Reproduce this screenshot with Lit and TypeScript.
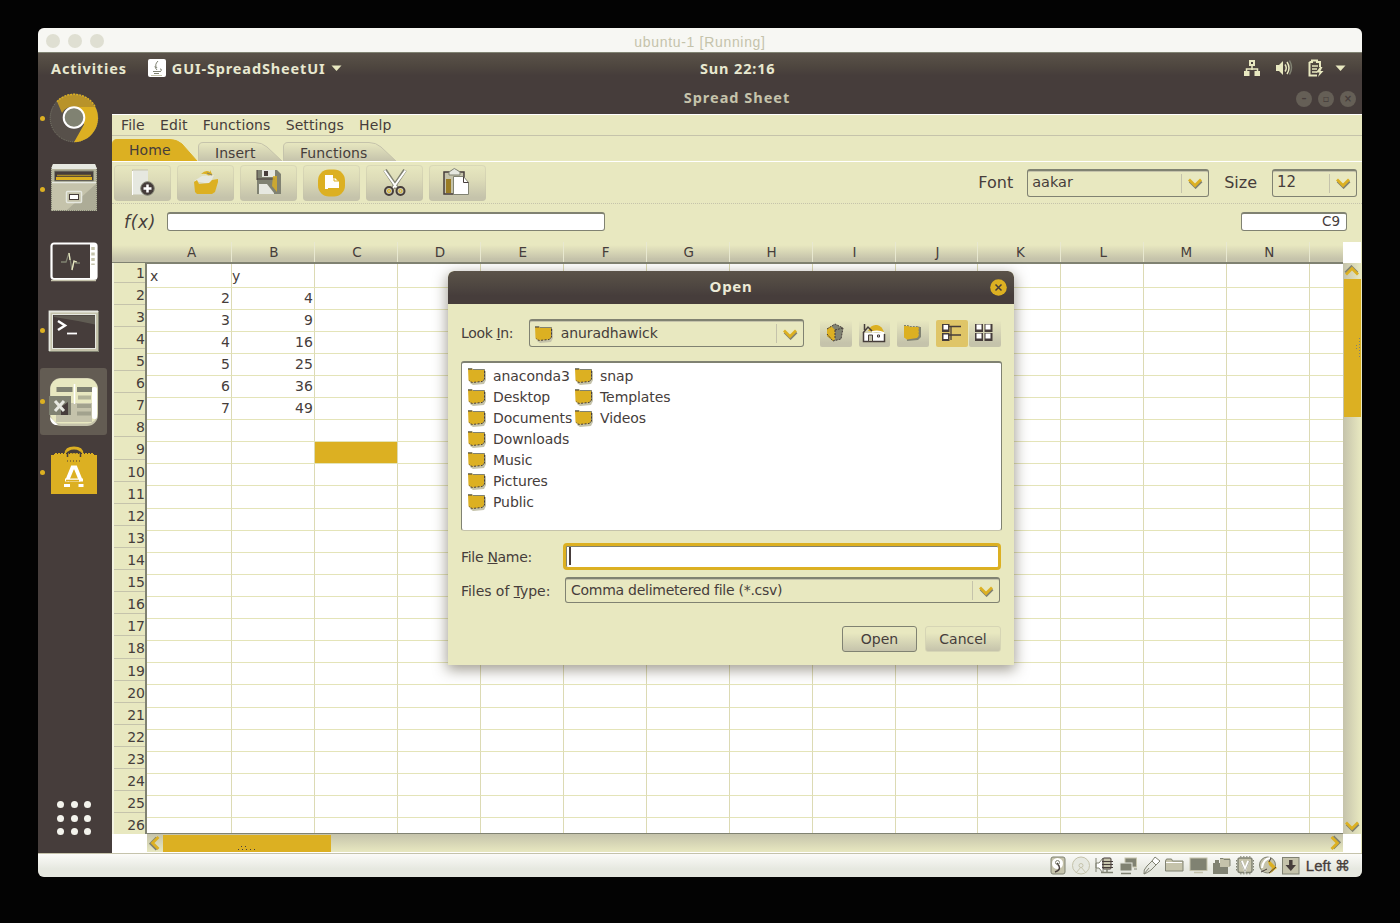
import { LitElement, html, css, svg } from "lit";
import { customElement } from "lit/decorators.js";

const D = "#463d3b";
const G = "#dcb022";
const C = "#e8e8c0";
const M = "#c5c3ab";
const K = "#808272";
const L = "#e6e8e0";

const icon = (w: number, h: number, body: unknown) =>
  html`<svg width=${w} height=${h} viewBox="0 0 ${w} ${h}" fill="none">${body}</svg>`;

const chevron = html`${icon(16, 12, svg`<path d="M2 3.5 L8 9.5 L14 3.5" stroke=${K} stroke-width="2.4" transform="translate(.6 .9)"/><path d="M2 2.5 L8 8.5 L14 2.5" stroke=${G} stroke-width="2.8"/>`)}`;

const folder = icon(20, 18, svg`
  <path d="M3 3 h5 l1 1 h10 v9 l-2 4 -11 1 -3-2z" fill=${M}/>
  <path d="M1 1.500 H5 l1 1 H18 V12 L15.500 14.500 L5 15.500 L1.500 13.500z" fill=${G}/>
  <path d="M1 1.500 H5 l1 1 H17.500 V12 L15.500 14.500" stroke=${K} stroke-width="1"/>
  <path d="M17.500 4 V12 L15 14.500 L5 15.500 L2 13.500" stroke=${D} stroke-width="1" stroke-dasharray="2 1.500"/><path d="M1.500 2.500h3" stroke=${D} stroke-dasharray="1 1"/>`);

const chrome = icon(50, 50, svg`
  <circle cx="25" cy="25" r="23.800" fill="#57504a" stroke=${K} stroke-width="1" stroke-dasharray="1 1"/>
  <path d="M8 8.500 A24 24 0 0 1 46 14 H26 A12 12 0 0 0 13 20z" fill="#b8932a"/>
  <path d="M8 8.500 A24 24 0 0 1 46 13.500" stroke=${G} stroke-width="1.500" stroke-dasharray="2 1"/>
  <path d="M27 14 H46.300 A24.200 24.200 0 0 1 25 49.300 L35 31.500z" fill=${G}/>
  <circle cx="25" cy="24.500" r="10.300" fill=${K} stroke="#fff" stroke-width="2"/>`);

const files = icon(50, 50, svg`<g transform="translate(0 -2)">
  <path d="M4 2 h42 l2 5 v42 h-46 v-42z" fill="#b5b49c"/>
  <path d="M4 2 h42 l2 5 h-46z" fill=${L}/>
  <rect x="6" y="9" width="38" height="10" fill=${D}/>
  <path d="M8 13.500h34" stroke="#a98a2a" stroke-width="1.500"/><path d="M7 16.500h36" stroke=${G} stroke-width="3"/>
  <path d="M5.500 9v10h39v-10z" stroke=${K}/>
  <rect x="3" y="20" width="44" height="28" fill=${M}/>
  <path d="M3 20.500h44" stroke=${L} stroke-width="1.500"/>
  <path d="M47 22v26H18z" fill=${K} opacity=".35"/>
  <path d="M2.500 6v42.500h45V6" stroke=${K} stroke-dasharray="1 1"/>
  <rect x="17.500" y="29.500" width="15" height="11" rx="1" fill=${M} stroke=${L} stroke-width="1.500"/>
  <rect x="20.500" y="32.500" width="9" height="5" fill="#fff" stroke=${D}/></g>`);

const monitor = icon(50, 46, svg`<g transform="translate(0 4)">
  <rect x="2.500" y="2.500" width="45" height="35.500" rx="2.500" fill=${D} stroke="#fff" stroke-width="2.200"/>
  <path d="M2 39.500h45" stroke=${M} stroke-width="1.500"/>
  <rect x="41" y="3" width="6" height="34" fill="#fff"/>
  <path d="M44 6v18" stroke=${M} stroke-width="3.500" stroke-dasharray="3 2.500"/>
  <path d="M12 21h5l3-9 3 17 2-9 2 2h4" stroke=${K} stroke-width="1.300"/>
  <path d="M20 12l1 7M23 29l2-9 3 1" stroke=${C} stroke-width="1.300"/></g>`);

const terminal = icon(52, 44, svg`
  <rect x="1" y="2" width="50" height="41" rx="1" fill=${M}/>
  <path d="M1.500 42V2.500H50" stroke=${L} stroke-width="1.800"/>
  <rect x="4.500" y="5.500" width="43" height="34" fill=${D} stroke=${L}/>
  <path d="M6 6.500h41v9L30 12 6 8z" fill=${K} opacity=".45"/>
  <path d="M50.500 3v39.500H1" stroke=${K}/>
  <path d="M10 12l7 4.500-7 4.500" stroke="#fff" stroke-width="2.500"/><path d="M19 24.500h10" stroke="#fff" stroke-width="1.800"/>`);

const sheet = icon(50, 50, svg`
  <rect x="1" y="1" width="48" height="48" rx="11" fill=${M}/>
  <rect x="1.500" y="1.500" width="47" height="45" rx="10" fill=${C}/>
  <rect x="43" y="10" width="5" height="32" rx="2" fill="#fff"/>
  <rect x="7" y="26" width="36" height="19" fill=${M}/>
  <rect x="7.500" y="10" width="16" height="5" fill=${K}/><rect x="28" y="10" width="15" height="5" fill=${K}/>
  <path d="M29 20.500h13M28 29h14M28 36.500h14" stroke=${K} stroke-width="4" opacity=".5"/>
  <path d="M25.500 7v20" stroke="#fff" stroke-width="1.500"/>
  <rect x="0" y="19" width="22" height="19" fill=${K}/><path d="M12 38V30l7-5v13z" fill=${D}/>
  <path d="M6 24l9 10M15 24l-9 10" stroke=${L} stroke-width="3"/><path d="M1 40l8 8H6q-5-2-5-8z" fill="#fff"/>`);

const software = icon(50, 52, svg`<g transform="translate(0 -1)">
  <path d="M17 9 q0-6 8-6 t8 6" stroke=${G} stroke-width="2.800"/>
  <path d="M5 8h40v3H5z" fill=${G}/><rect x="2" y="10" width="46" height="39" fill=${G}/>
  <path d="M5 8.500h40" stroke=${D} stroke-dasharray="1 2"/>
  <path d="M18.500 12V7.500h13V12" stroke=${D} stroke-width="1.500"/><path d="M21 8.500h8v3h-8z" fill=${G}/>
  <path d="M18 16h15" stroke=${D} stroke-dasharray="1 2"/>
  <path d="M18 36L23.500 22.500h3L32 36" stroke="#fff" stroke-width="3.800"/><path d="M15 40.500h6M29.500 40.500h5M16 35h18" stroke="#fff" stroke-width="3"/>
  <path d="M17 35.500h13" stroke=${G} stroke-width="1.500"/></g>`);

const java = icon(18, 18, svg`<rect width="18" height="18" rx="2" fill="#fff"/><path d="M10 2q-4 4-1 7M7 7q0 2 2 4M5 12.500h7M6 14.500h5M12 10q3 0 0 3" stroke=${K}/><path d="M3 16.500h11" stroke=${M}/>`);
const tri = icon(11, 7, svg`<path d="M.5 .5h10L5.500 6z" fill=${C}/>`);
const network = icon(18, 18, svg`<path d="M9 6v5M3.500 13v-3h11v3" stroke=${C} stroke-width="1.500"/><path d="M6 1h6v6H6zM1 12h5.500v5H1zM11.500 12H17v5h-5.500z" fill=${C}/><path d="M8 3h2v2H8z" fill=${D}/>`);
const sound = icon(18, 18, svg`<path d="M1 6h3l4-4v14l-4-4H1z" fill=${C}/><path d="M10 5.500q2.500 3.500 0 7M12 3q4 6 0 12" stroke=${C} stroke-width="1.500"/><path d="M14.500 1.500q4 7 0 14" stroke=${K} stroke-width="1.500"/>`);
const battery = icon(18, 19, svg`<path d="M2.500 3h2.500V1.500h5V3h3v5M2.500 3v13.500H10" stroke=${C} stroke-width="2"/><path d="M5 7h6M5 10h5M5 13h5" stroke=${C} stroke-width="1.500"/><path d="M13 8l-4 5.500h3.500L11 18l5.500-6H13.500l2-4z" fill=${C}/>`);

const tools = [
  icon(32, 32, svg`<path d="M5 3h16v25H5z" fill=${L}/><path d="M5 3h16M5.500 3v25h13" stroke=${M}/><path d="M5.500 4v24" stroke="#fff"/><circle cx="20.500" cy="21.500" r="6.800" fill=${D} stroke=${K}/><path d="M20.500 17.500v8M16.500 21.500h8" stroke="#fff" stroke-width="2.500"/>`),
  icon(32, 32, svg`<path d="M11 7q5-5 9-2v-2l3 6-6 1 1-2q-3-2-7-1z" fill=${G}/><path d="M4 14l8-5 12-1-4 9z" fill=${L}/><path d="M4 15l3-2 2 4 10-1 3-3 6-1v3l-3 10-3 2H7l-2-2z" fill=${G}/><path d="M17 6l5 2" stroke=${K}/>`),
  icon(32, 32, svg`<path d="M4 3h20l4 4v20H4z" fill=${K}/><path d="M9 3h13v7H9z" fill=${L}/><path d="M11 4h4v5h-4z" fill=${D}/><path d="M4 12h18M4 3v10" stroke=${D}/><path d="M6 17h15v10H6z" fill=${L}/><path d="M14 17l7 9v-9z" fill=${K}/><path d="M20 9h4v16l-5-6z" fill=${G} opacity=".8"/>`),
  icon(32, 32, svg`<rect x="2" y="2.500" width="27" height="27" rx="11" fill=${G}/><path d="M9 8h8v3h2l4 4v6H12v1H9z" fill="#fff"/><path d="M18 10v4h4" stroke=${G}/>`),
  icon(32, 32, svg`<path d="M6 3l12 18M26 3L14 21" stroke=${K} stroke-width="4"/><path d="M5.500 3.500l12 17M26.500 3.500L14 21" stroke="#fff" stroke-width="2"/><circle cx="10" cy="24" r="4" stroke=${D} stroke-width="2"/><circle cx="21.500" cy="24" r="4" stroke=${D} stroke-width="2"/><circle cx="10" cy="24" r="1.500" stroke=${G}/><circle cx="21.500" cy="24" r="1.500" stroke=${G}/>`),
  icon(32, 32, svg`<path d="M2 5h20v22H2z" fill=${M} stroke=${D} stroke-width="1.500"/><path d="M4 12h5v14H4z" fill="#9a7d26"/><path d="M7 8V5l3-2q2-3 5 0l3 2v3z" fill=${L} stroke=${K}/><path d="M11.500 9.500h10l5 6v12h-15z" fill="#fff" stroke=${K}/><path d="M21.500 9.500v6h5" stroke=${D}/>`),
];

const dlgTools = [
  icon(24, 22, svg`<path d="M3 7l8-5 8 4-2 11-8 2-6-5z" fill=${K}/><path d="M3 7l4-3 4 4v9l-2 2-6-5z" fill=${G}/><path d="M3 7l8-5 8 4-2 11-8 2M11 8l8-2M11 8v9M3 12l6 7" stroke=${D} stroke-dasharray="2 1"/>`),
  icon(26, 22, svg`<path d="M7 9q3-7 9-6 5 1 7 7z" fill=${G}/><path d="M3 11h20v8H3z" fill="#fff"/><path d="M3.500 2v6M2 11l5-6 4 4M2.500 11v8.500h21V12" stroke=${D} stroke-width="1.500"/><path d="M11 10q6-2 12 1" stroke="#fff" stroke-width="1.500"/><path d="M7.500 13h4v6.500h-4z" fill=${M} stroke=${D}/><path d="M16.500 13h2v2h-2z" stroke=${D}/>`),
  icon(22, 18, svg`<path d="M4 3h15v10l-3 3-11 1z" fill=${K}/><path d="M2 2h5l1 1h9v9l-2 2-10 1.500-3-2z" fill=${G}/><path d="M2 1.500h4l2 1h9v10l-2 2" stroke=${K} stroke-dasharray="2 1"/>`),
  icon(22, 20, svg`<path d="M1 1h7.500v8H1zM1 10h7.500v8H1z" fill=${D}/><path d="M2.500 2h4.500v4.500h-4.500zM2.500 11.500h4.500v4.500h-4.500z" fill="#fff"/><path d="M8 3.500h12M8 12h12M10 3v14" stroke=${D} stroke-width="1.300"/>`),
  icon(22, 20, svg`<path d="M1 1h8v8H1zM10.500 1h8v8h-8zM1 10h8v8H1zM10.500 10h8v8h-8z" fill=${D}/><path d="M2.500 1.500h5v5h-5zM11.500 1.500h5v5h-5zM2.500 10.500h5v5h-5zM11.500 10.500h5v5h-5z" fill="#fff"/>`),
];

const tray = [
  svg`<rect x="3" y="1" width="14" height="17" rx="2" fill=${M} stroke=${K}/><circle cx="9.500" cy="7.500" r="5.500" fill="#fff"/><path d="M9 7l2 3q2 4-4 6" stroke=${D} stroke-width="1.500"/><circle cx="9.500" cy="6.500" r="2" stroke=${K}/>`,
  svg`<circle cx="10" cy="9.500" r="8.500" fill=${L} stroke=${M}/><circle cx="10" cy="9.500" r="2" stroke=${M}/><path d="M10 11l-5 6M10 11l5 6" stroke=${M}/>`,
  svg`<path d="M2 2v14M2 7h3l4-5v15l-4-5H2z" fill="#fff" stroke=${K}/><rect x="9" y="2" width="8" height="11" rx="1" fill=${M} stroke=${D}/><path d="M8 5.500h11M8 8.500h11M8 11.500h11" stroke=${D}/><path d="M7 16.500h12M13 13v4" stroke=${K} stroke-width="1.500"/>`,
  svg`<rect x="7" y="2" width="11.500" height="9" fill=${K} stroke=${M}/><path d="M16 13h3" stroke=${K}/><rect x="2" y="7" width="12" height="8" fill=${K} stroke=${L}/><path d="M3 17.500h10" stroke=${K} stroke-width="1.500"/>`,
  svg`<path d="M3 18q-1-4 3-8l5-5 4 4-5 5q-4 3-7 4z" fill=${L} stroke=${K}/><path d="M11 5l3-4 5 4-4 4z" fill="#fff" stroke=${K}/><path d="M3 18l5-6" stroke=${K}/>`,
  svg`<path d="M1.500 15V5l1-2h5l1 2h10.500V15z" fill=${M} stroke=${K}/><path d="M2 6.500h16" stroke="#fff"/>`,
  svg`<rect x="2" y="2" width="17" height="12.500" fill=${K} stroke=${M}/><path d="M6 16.500h9" stroke=${M} stroke-width="1.500"/>`,
  svg`<path d="M2 7h15v11H2z" fill=${K}/><path d="M9 2h10v9H9z" fill=${M}/><path d="M9 2.500h3l1 1h6V10" stroke=${K}/><path d="M4 4h4v5H4z" fill=${K}/>`,
  svg`<rect x="3" y="2" width="14" height="14.500" rx="2" fill=${M} stroke=${K} stroke-width="1.500"/><path d="M5 .8h11M5 17.800h11" stroke=${K} stroke-dasharray="1.500 1.500"/><path d="M1.500 4v11M18.500 4v11" stroke=${K} stroke-dasharray="1.500 1.500"/><path d="M6.500 5l3.500 9 3.500-9" stroke="#fff" stroke-width="2.500"/><path d="M5.500 5l4.500 10.500L14.500 5" stroke=${K} stroke-width=".6"/>`,
  svg`<circle cx="9.500" cy="9" r="8" fill=${M} stroke=${K}/><path d="M4 12q1-9 8-10" stroke="#fff" stroke-width="2"/><path d="M10 5l2 0 7 7-8 6 3-6-3-3z" fill=${G}/><path d="M13 2l-2 4M3 16l6-3M18 11l-7 6" stroke=${D}/>`,
  svg`<rect x="1.500" y="1.500" width="16.500" height="16.500" fill=${M} stroke=${K}/><path d="M9.800 4v6" stroke=${D} stroke-width="3.500"/><path d="M4.500 9h10.500l-5.200 6z" fill=${D}/>`,
];

const data: Record<string, string>[] = [
  { A: "x", B: "y" }, { A: "2", B: "4" }, { A: "3", B: "9" }, { A: "4", B: "16" },
  { A: "5", B: "25" }, { A: "6", B: "36" }, { A: "7", B: "49" },
];
const cols = "ABCDEFGHIJKLMN".split("");
const rows = Array.from({ length: 26 }, (_, i) => i + 1);

@customElement("open-dialog")
export class OpenDialog extends LitElement {
  static styles = css`
    :host { display: flex; flex-direction: column; width: 566px; height: 394px; background: #e8e8c0; color: #463d3b;
      font: 14px/20px "DejaVu Sans", sans-serif; border-radius: 6px 6px 0 0; box-shadow: 0 4px 14px 1px rgba(70, 61, 40, .5); overflow: hidden visible; }
    svg { display: block; flex: none; }
    .bar { height: 33px; flex: none; display: grid; grid-template-columns: 1fr auto 1fr; align-items: center; border-radius: 6px 6px 0 0;
      background: linear-gradient(#5b5349, #4d4540 50%, #463d3b 75%); color: #ecebd8; font: bold 15px/20px "Noto Sans", sans-serif; letter-spacing: .7px; }
    .bar span { grid-column: 2; padding-bottom: 3px; }
    .x { justify-self: end; margin-right: 7px; }
    .look { display: flex; align-items: center; height: 28px; margin: 15px 13px 0 13px; }
    .look .lbl { width: 68px; letter-spacing: -.35px; }
    .combo { display: flex; align-items: center; box-sizing: border-box; border: 1px solid #808272; border-top-width: 2px; border-radius: 3px; height: 28px; box-shadow: inset 0 1px #c5c3ab; }
    .combo span { flex: 1; padding-bottom: 1px; }
    .combo .arr { width: 26px; height: 19px; border-left: 1px solid #c5c3ab; display: grid; place-items: center; }
    .c1 { width: 276px; letter-spacing: -.1px; } .c1 .f { margin: 0 7px 0 4px; }
    .tool { width: 32px; height: 27px; display: grid; place-items: center; background: linear-gradient(#e8e8c0, #c5c3ab 85%); border-radius: 2px; margin-right: 7px; }
    .tool:nth-child(3) { margin-left: 16px; }
    .tool.on { background: #dfc568; margin: 0 1px 0 0; }
    .tool:last-child { margin: 0; }
    .list { box-sizing: border-box; width: 541px; height: 170px; margin: 14px 0 0 13px; background: #fff; border: 1px solid #808272; border-top-width: 2px; border-bottom-color: #c5c3ab; border-radius: 3px;
      display: grid; grid-template-columns: 107px 120px; grid-template-rows: repeat(7, 21px); grid-auto-flow: column; padding: 2px 0 0 5px; white-space: nowrap; letter-spacing: -.08px; }
    .item { display: flex; align-items: center; gap: 6px; }
    .fld { display: flex; align-items: center; margin-left: 13px; }
    .name { margin-top: 11px; height: 28px; } .name .lbl, .type .lbl { width: 102px; letter-spacing: -.3px; padding-top: 1px; }
    .input { box-sizing: border-box; width: 438px; height: 27px; border: 3px solid #dcb022; border-radius: 4px; background: #fff; box-shadow: inset 0 1px #808272, inset 1px 0 #808272; display: flex; align-items: center; }
    .caret { width: 1.500px; height: 18px; margin-left: 3px; background: #463d3b; }
    .type { margin-top: 7px; height: 26px; } .type .lbl { width: 104px; letter-spacing: -.05px; }
    .type .combo { width: 435px; height: 26px; padding-left: 5px; letter-spacing: -.26px; }
    .btns { display: flex; gap: 8px; justify-content: flex-end; margin: 23px 13px 0 0; }
    .btn { box-sizing: border-box; width: 76px; height: 26px; line-height: 24px; text-align: center; border-radius: 3px; background: linear-gradient(#e8e8c0 25%, #c5c3ab); border: 1px solid #d6d5b5; }
    .btn.def { width: 75px; border: 1px solid #808272; }
  `;
  render() {
    const names = ["anaconda3", "Desktop", "Documents", "Downloads", "Music", "Pictures", "Public", "snap", "Templates", "Videos"];
    return html`
      <div class="bar"><span>Open</span><div class="x">${icon(17, 17, svg`<circle cx="8.500" cy="8.500" r="8.300" fill=${G}/><path d="M5.500 5.500l6 6M11.500 5.500l-6 6" stroke=${D} stroke-width="1.500"/>`)}</div></div>
      <div class="look"><span class="lbl">Look <u>I</u>n:</span>
        <div class="combo c1"><div class="f">${folder}</div><span>anuradhawick</span><div class="arr">${chevron}</div></div>
        ${dlgTools.map((t, i) => html`<div class="tool ${i === 3 ? "on" : ""}">${t}</div>`)}
      </div>
      <div class="list">${names.map((n) => html`<div class="item">${folder}<span>${n}</span></div>`)}</div>
      <div class="fld name"><span class="lbl">File <u>N</u>ame:</span><div class="input"><div class="caret"></div></div></div>
      <div class="fld type"><span class="lbl">Files of <u>T</u>ype:</span><div class="combo"><span>Comma delimetered file (*.csv)</span><div class="arr">${chevron}</div></div></div>
      <div class="btns"><div class="btn def">Open</div><div class="btn">Cancel</div></div>`;
  }
}

@customElement("app-root")
export class AppRoot extends LitElement {
  static styles = css`
    :host { display: block; box-sizing: border-box; width: 1400px; height: 923px; padding: 28px 38px 46px; background: #030303; color: #463d3b;
      font: 14px/20px "DejaVu Sans", sans-serif; position: relative; overflow: hidden; white-space: nowrap; }
    svg { display: block; flex: none; }
    .vm { display: flex; flex-direction: column; height: 849px; border-radius: 6px; overflow: hidden; background: #463d3b; }
    .mac { height: 25px; flex: none; display: grid; grid-template-columns: 1fr auto 1fr; align-items: center; background: #f7f7f3; color: #c5c3ab; font: 14px/24px "Liberation Sans", sans-serif; letter-spacing: .68px; border-bottom: 1px solid #808272; box-sizing: border-box; }
    .mac span { padding-top: 2px; }
    .lights { display: flex; gap: 8px; padding-left: 8px; } .lights i { width: 14px; height: 14px; border-radius: 50%; background: #dfdfd2; }
    .panel { height: 30px; flex: none; display: grid; grid-template-columns: 662px 75px 1fr; align-items: center; background: linear-gradient(#5a5249, #4e463f 45%, #463d3b 75%); color: #e8e8d0; font: bold 14.500px/20px "Noto Sans", sans-serif; letter-spacing: .85px; }
    .panel span { padding-bottom: 1px; }
    .left, .right { display: flex; align-items: center; }
    .left { padding-left: 13px; } .app { margin: 0 5px 0 6px; } .left svg:first-of-type { margin-left: 21px; }
    .right { justify-content: flex-end; padding-right: 16px; gap: 14px; } .right svg:last-of-type { margin-left: -4px; }
    .main { flex: 1; display: flex; min-height: 0; }
    .dock { width: 74px; flex: none; display: flex; flex-direction: column; }
    .it { height: 70.800px; flex: none; display: flex; align-items: center; }
    .it .dot { width: 5px; height: 5px; margin: 0 0 0 2px; border-radius: 50%; background: #dcb022; }
    .it .dot.no { background: none; }
    .it .box { width: 67px; height: 67px; margin-left: -5px; display: grid; place-items: center; }
    .it .sel { background: #635c53; border-radius: 3px; } .it .dot { z-index: 1; }
    .apps { margin: auto 0 18px 19px; display: grid; grid-template-columns: repeat(3, 7px); gap: 6.500px; } .apps i { width: 7px; height: 7px; border-radius: 50%; background: #f3f3ec; }
    .col { flex: 1; display: flex; flex-direction: column; min-width: 0; }
    .title { height: 31px; flex: none; display: grid; grid-template-columns: 1fr auto 1fr; align-items: center; color: #c5c3ab; font: bold 14.500px/20px "Noto Sans", sans-serif; letter-spacing: 1px; }
    .title span { grid-column: 2; padding-bottom: 3px; } .wb { display: flex; gap: 6px; justify-content: flex-end; padding-right: 6px; } .wb i { width: 16px; height: 16px; border-radius: 50%; background: #655f56; display: grid; place-items: center; font: bold 10px/10px "DejaVu Sans"; color: #463d3b; letter-spacing: 0; }
    .win { flex: 1; display: flex; flex-direction: column; background: #e8e8c0; min-height: 0; border-top: 1px solid #fff; box-sizing: border-box; }
    .menu { flex: none; display: flex; gap: 15.200px; padding: 0 0 0 9px; box-sizing: border-box; border-bottom: 1px solid #c5c3ab; line-height: 21px; height: 21px; letter-spacing: .1px; }
    .tabs { height: 26px; flex: none; display: flex; align-items: flex-end; box-sizing: border-box; border-bottom: 1px solid #fff; }
    .tab { display: grid; height: 19px; line-height: 22px; } 
    .tab > * { grid-area: 1 / 1; } .tab span { padding-left: 17px; letter-spacing: .05px; }
    .tab.on span { line-height: 23px; }
    .bar { height: 42px; flex: none; display: flex; align-items: center; padding: 0 5px 0 2px; gap: 6px; box-sizing: border-box; border-bottom: 1px dotted #c5c3ab; }
    .tb { width: 57px; height: 36px; display: grid; place-items: center; border-radius: 4px; background: linear-gradient(#e8e8c0, #dddcb8 40%, #c5c3ab 90%); box-shadow: inset 0 0 0 1px rgba(197, 195, 171, .4); }
    .sp { flex: 1; }
    .big { font-size: 16px; letter-spacing: 0; }
    .combo { display: flex; align-items: center; box-sizing: border-box; border: 1px solid #808272; border-top-width: 2px; border-radius: 3px; height: 28px; box-shadow: inset 0 1px #c5c3ab; padding-left: 4px; }
    .combo span { flex: 1; padding-bottom: 2px; } .combo .arr { width: 26px; height: 19px; border-left: 1px solid #c5c3ab; display: grid; place-items: center; }
    .c1 { width: 182px; margin: 0 9px 0 8px; font-size: 14.500px; } .c2 { width: 85px; margin-left: 9px; font-size: 15px; }
    .fx { height: 38px; flex: none; display: flex; align-items: center; padding: 0 15px 4px 12px; box-sizing: border-box; }
    .fx em { font-size: 17px; width: 43px; letter-spacing: .7px; padding-top: 2px; }
    .inp { box-sizing: border-box; width: 438px; height: 19px; background: #fff; border: 1px solid #808272; border-top-width: 2px; border-radius: 3px; }
    .cell { width: 106px; text-align: right; padding-right: 6px; line-height: 15px; font-size: 13.500px; }
    .sheet { flex: 1; display: grid; grid-template-columns: 35px 1196px 18px; grid-template-rows: 21px 571px 18px; background: #fff; min-height: 0; border-right: 1px solid #e8e8c0; }
    .hd { display: flex; background: linear-gradient(#e8e8c0 15%, #c5c3ab 85%); border-bottom: 1px solid #808272; box-sizing: border-box; }
    .hd div { width: 82.950px; flex: none; box-sizing: border-box; border-right: 1px solid #e8e8d0; text-align: center; font-size: 13.500px; line-height: 20px; padding-left: 2px; }
    .hd div:first-child { width: 85px; padding-left: 5px; }
    .nums { background: #e8e8c0; overflow: hidden; border-left: 2px solid #f3f3e0; box-sizing: border-box; border-right: 2px solid #808272; }
    .nums div { height: 22.110px; box-sizing: border-box; border-bottom: 1px solid #c5c3ab; text-align: right; line-height: 24px; padding-right: 0; }
    .nums div:first-child { height: 19.700px; line-height: 20px; }
    .cells { overflow: hidden; border-top: 1px solid #808272; border-bottom: 1px solid #808272; box-sizing: border-box; }
    .r { display: flex; height: 22.110px; } .r:first-child { height: 23.500px; }
    .r div { width: 82.950px; flex: none; box-sizing: border-box; border-right: 1px solid #dcdab4; border-bottom: 1px solid #e4e4b8; text-align: right; line-height: 21px; padding-right: 1px; }
    .r div:first-child { width: 85px; } .r div:last-child { flex: 1; border-right: 0; }
    .r div.s { text-align: left; padding-left: 3px; line-height: 25px; } .r div.s + .s { padding-left: 0; }
    .r div.pick { background: #dcb022; }
    .vs { background: linear-gradient(90deg, #c5c3ab, #e8e8c0); display: flex; flex-direction: column; align-items: center; }
    .vs .th { width: 17px; height: 138px; background: #dcb022; display: grid; place-items: center end; }
    .vs .ar, .hs .ar { width: 16px; height: 16px; display: grid; place-items: center; }
    .hs { background: linear-gradient(#c5c3ab, #e8e8c0); display: flex; align-items: center; }
    .hs .th { width: 168px; height: 17px; background: #dcb022; display: grid; place-items: end center; }
    .up { transform: rotate(180deg); } .lf { transform: rotate(90deg); } .rt { transform: rotate(-90deg); }
    .status { height: 24px; flex: none; box-sizing: border-box; border-top: 1px solid #c5c3ab; background: linear-gradient(#fbfbf8, #e6e8e0 65%); display: flex; align-items: center; justify-content: flex-end; padding-right: 12px; gap: 3.400px; color: #463d3b; font: 15px/22px "Liberation Sans", "DejaVu Sans", sans-serif; -webkit-text-stroke: .3px #463d3b; }
    .status span { margin-left: 1px; }
    open-dialog { position: absolute; left: 448px; top: 271px; }
  `;

  private tab(label: string, w: number, on = false) {
    const h = on ? 22 : 19;
    const s = w - 28;
    const d = `M.5 ${h}V5Q.5 .5 5 .5H${s}Q${s + 7} .5 ${s + 12} 5L${w - 1} ${h}`;
    return html`<div class="tab ${on ? "on" : ""}" style="width:${w}px;height:${h}px">
      ${icon(w, h, svg`<defs><linearGradient id="g" x2="0" y2="1"><stop stop-color=${C}/><stop offset="1" stop-color=${M}/></linearGradient></defs>
        <path d=${d} fill=${on ? G : "url(#g)"} stroke=${on ? G : M}/>`)}<span>${label}</span></div>`;
  }

  render() {
    const dock: [unknown, boolean, boolean][] = [[chrome, true, false], [files, true, false], [monitor, false, false], [terminal, true, false], [sheet, true, true], [software, true, false]];
    return html`
      <div class="vm">
        <div class="mac"><div class="lights"><i></i><i></i><i></i></div><span>ubuntu-1 [Running]</span></div>
        <div class="panel">
          <div class="left"><span>Activities</span>${java}<span class="app">GUI-SpreadSheetUI</span>${tri}</div>
          <span>Sun 22:16</span>
          <div class="right">${network}${sound}${battery}${tri}</div>
        </div>
        <div class="main">
          <div class="dock">
            ${dock.map(([i, dot, sel]) => html`<div class="it"><i class="dot ${dot ? "" : "no"}"></i><div class="box ${sel ? "sel" : ""}">${i}</div></div>`)}
            <div class="apps">${Array.from({ length: 9 }, () => html`<i></i>`)}</div>
          </div>
          <div class="col">
            <div class="title"><span>Spread Sheet</span><div class="wb"><i>–</i><i>▫</i><i>×</i></div></div>
            <div class="win">
              <div class="menu"><span>File</span><span>Edit</span><span>Functions</span><span>Settings</span><span>Help</span></div>
              <div class="tabs">${this.tab("Home", 86, true)}${this.tab("Insert", 85)}${this.tab("Functions", 114)}</div>
              <div class="bar">
                ${tools.map((t) => html`<div class="tb">${t}</div>`)}
                <div class="sp"></div><span class="big">Font</span><div class="combo c1"><span>aakar</span><div class="arr">${chevron}</div></div>
                <span class="big">Size</span><div class="combo c2"><span>12</span><div class="arr">${chevron}</div></div>
              </div>
              <div class="fx"><em>f(x)</em><div class="inp"></div><div class="sp"></div><div class="inp cell">C9</div></div>
              <div class="sheet">
                <div class="hd"></div>
                <div class="hd">${cols.map((c) => html`<div>${c}</div>`)}</div>
                <div></div>
                <div class="nums">${rows.map((r) => html`<div>${r}</div>`)}</div>
                <div class="cells">${rows.map((r) => html`<div class="r">${[...cols, ""].map((c) => {
                  const v = data[r - 1]?.[c] ?? "";
                  return html`<div class="${r === 1 && v ? "s" : ""} ${r === 9 && c === "C" ? "pick" : ""}">${v}</div>`;
                })}</div>`)}</div>
                <div class="vs"><div class="ar up">${chevron}</div><div class="th">${icon(7, 22, svg`<path d="M5.500 1v20M2.500 8v6" stroke=${K} stroke-dasharray="1 2"/>`)}</div><div class="sp"></div><div class="ar">${chevron}</div></div>
                <div></div>
                <div class="hs"><div class="ar lf">${chevron}</div><div class="th">${icon(20, 7, svg`<path d="M1 4.500h18M4 1.500h6" stroke=${D} stroke-dasharray="1 3"/>`)}</div><div class="sp"></div><div class="ar rt">${chevron}</div></div>
                <div></div>
              </div>
            </div>
          </div>
        </div>
        <div class="status">${tray.map((t) => icon(20, 19, t))}<span>Left ⌘</span></div>
      </div>
      <open-dialog></open-dialog>`;
  }
}
